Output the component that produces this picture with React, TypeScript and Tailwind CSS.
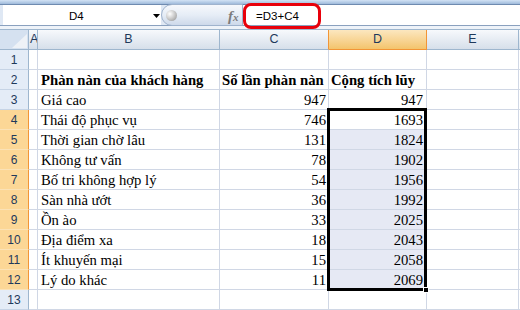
import React from "react";

type Row = { b: string; c: string; d: string; bold?: boolean };

const data: Row[] = [
  { b: "", c: "", d: "" },
  { b: "Phàn nàn của khách hàng", c: "Số lần phàn nàn", d: "Cộng tích lũy", bold: true },
  { b: "Giá cao", c: "947", d: "947" },
  { b: "Thái độ phục vụ", c: "746", d: "1693" },
  { b: "Thời gian chờ lâu", c: "131", d: "1824" },
  { b: "Không tư vấn", c: "78", d: "1902" },
  { b: "Bố tri không hợp lý", c: "54", d: "1956" },
  { b: "Sàn nhà ướt", c: "36", d: "1992" },
  { b: "Ồn ào", c: "33", d: "2025" },
  { b: "Địa điểm xa", c: "18", d: "2043" },
  { b: "Ít khuyến mại", c: "15", d: "2058" },
  { b: "Lý do khác", c: "11", d: "2069" },
  { b: "", c: "", d: "" },
];

const sans = "font-['Liberation_Sans',Arial,sans-serif]";
const serif = "font-['Liberation_Serif','Times_New_Roman',serif]";

export default function App() {
  return (
    <div className={`relative w-[520px] h-[310px] overflow-hidden bg-white ${sans}`}>
      {/* top strip */}
      <div className="h-[4px] bg-linear-to-b from-[#d3e3f5] to-[#9fbadb]" />
      {/* formula bar */}
      <div className="flex h-[22px] border-t border-b border-t-[#6f8bb0] border-b-[#8aa1bf] bg-[#dfe8f4]">
        <div className="ml-[3px] w-[158px] bg-white flex items-center relative">
          <span className="absolute left-[66px] top-[3px] text-[11.5px] text-black">D4</span>
          <svg className="absolute left-[150px] top-[9px]" width="7" height="4" viewBox="0 0 7 4">
            <polygon points="0,0 7,0 3.5,4" fill="#000" />
          </svg>
        </div>
        <div className="w-[82px] rounded-l-full border border-[#9fb3cd] -mt-px -mb-px bg-linear-to-b from-[#f6f8fc] via-[#e6edf6] to-[#cdd9ea] relative">
          <div className="absolute left-[4px] top-[5px] w-[11px] h-[11px] rounded-full bg-radial-[at_35%_35%] from-[#ffffff] via-[#c8c8c8] to-[#8c8c8c]" />
          <span className={`absolute left-[66px] top-[0px] text-[15px] font-bold italic text-[#7c7c7c] ${serif}`}>
            f<span className="text-[11px]">x</span>
          </span>
        </div>
        <div className="flex-1 bg-white relative">
          <span className="absolute left-[13px] top-[3px] text-[11.5px] text-black">=D3+C4</span>
        </div>
      </div>
      {/* gap */}
      <div className="h-[3px] bg-[#eef3f9]" />
      {/* column headers */}
      <div className="grid grid-cols-[29px_9px_182px_109px_98px_92px_1fr] h-[21px] border-t border-[#9eb6ce] text-[12.5px] text-[#1e395b]">
        <div className="relative border-r border-b border-[#9eb6ce] bg-[#d5e1f0]">
          <svg className="absolute right-[1px] bottom-[1px]" width="15" height="14" viewBox="0 0 15 14">
            <polygon points="15,0 15,14 0,14" fill="#eef2f7" />
          </svg>
        </div>
        <div className="overflow-hidden border-r border-b border-[#9eb6ce] bg-linear-to-b from-[#f7f9fc] to-[#d6dfea] flex items-center pl-[1px]">A</div>
        <div className="border-r border-b border-[#9eb6ce] bg-linear-to-b from-[#f7f9fc] to-[#d6dfea] flex items-center justify-center">B</div>
        <div className="border-r border-b border-r-[#f29536] border-b-[#9eb6ce] bg-linear-to-b from-[#f7f9fc] to-[#d6dfea] flex items-center justify-center">C</div>
        <div className="border-r border-b border-[#f29536] bg-linear-to-b from-[#fce7bf] to-[#f3c46b] flex items-center justify-center">D</div>
        <div className="border-r border-b border-[#9eb6ce] bg-linear-to-b from-[#f7f9fc] to-[#d6dfea] flex items-center justify-center">E</div>
        <div className="border-b border-[#9eb6ce] bg-linear-to-b from-[#f7f9fc] to-[#d6dfea]" />
      </div>
      {/* rows */}
      {data.map((r, i) => {
        const n = i + 1;
        const sel = n >= 4 && n <= 12;
        const shade = n >= 5 && n <= 12;
        const num = !r.bold;
        return (
          <div key={n} className="grid grid-cols-[29px_9px_182px_109px_98px_92px_1fr] h-[20px]">
            <div
              className={
                sel
                  ? "border-r border-b border-r-[#f29536] border-b-[#fbe2b6] bg-[#fcd796] flex items-center justify-center text-[12px] text-[#1e395b] pt-[1px]"
                  : "border-r border-b border-r-[#9eb6ce] border-b-[#c6d4e6] bg-[#e4ecf7] flex items-center justify-center text-[12px] text-[#1e395b] pt-[1px]"
              }
            >
              {n}
            </div>
            <div className="border-r border-b border-[#d0d7e5]" />
            <div className={`border-r border-b border-[#d0d7e5] flex items-end pl-[3px] whitespace-nowrap overflow-hidden text-[14.7px] leading-[18px] text-black ${serif} ${r.bold ? "font-bold" : ""}`}>
              {r.b}
            </div>
            <div className={`border-r border-b border-[#d0d7e5] flex items-end whitespace-nowrap overflow-hidden text-[14.7px] leading-[18px] text-black ${serif} ${r.bold ? "font-bold pl-[2px]" : "justify-end pr-[2px]"}`}>
              {r.c}
            </div>
            <div className={`border-r border-b border-[#d0d7e5] flex items-end whitespace-nowrap overflow-hidden text-[14.7px] leading-[18px] text-black ${serif} ${shade ? "bg-[#e6e9f4]" : ""} ${r.bold ? "font-bold pl-[2px]" : num ? "justify-end pr-[3px]" : ""}`}>
              {r.d}
            </div>
            <div className="border-r border-b border-[#d0d7e5]" />
            <div className="border-b border-[#d0d7e5]" />
          </div>
        );
      })}
      {/* selection */}
      <div className="absolute left-[327px] top-[108px] w-[100px] h-[183px] border-[3px] border-black pointer-events-none" />
      <div className="absolute left-[423px] top-[287px] w-[6px] h-[6px] bg-black border border-white" />
      {/* red highlight */}
      <div className="absolute left-[243px] top-[3px] w-[78px] h-[26px] border-[3px] border-[#e8000b] rounded-[8px]" />
    </div>
  );
}
